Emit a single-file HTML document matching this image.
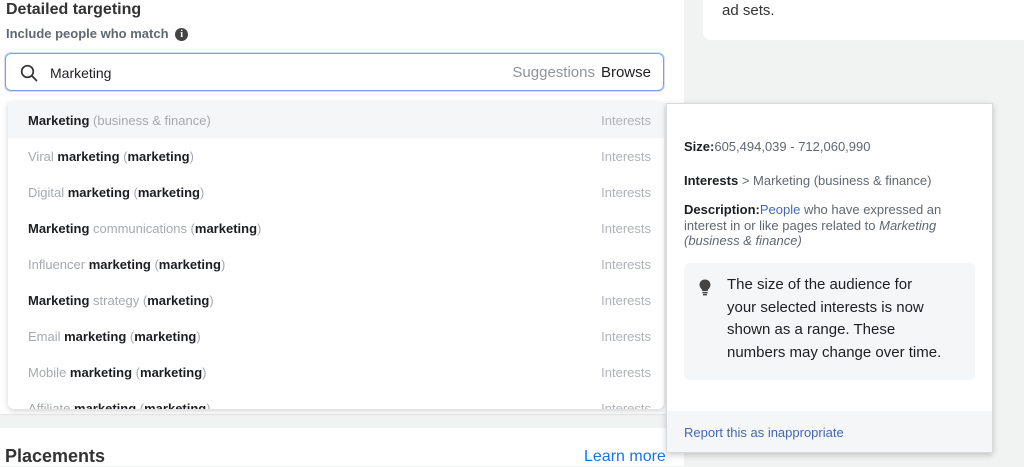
<!DOCTYPE html>
<html><head><meta charset="utf-8"><style>
*{margin:0;padding:0;box-sizing:border-box}
body{width:1024px;height:466px;overflow:hidden;background:#f1f2f2;font-family:"Liberation Sans",Arial,sans-serif;position:relative;color:#1c1e21}
.left{position:absolute;left:0;top:0;width:684px;height:466px;background:#fff}
.band{position:absolute;left:0;top:414px;width:684px;height:14px;background:#f1f2f2;border-top:1px solid #e4e6e8}
h1{position:absolute;left:6px;top:1px;font-size:16px;font-weight:bold;color:#333}
.sub{position:absolute;left:6px;top:26px;font-size:13px;color:#606770;font-weight:bold}
.info{display:inline-block;width:13px;height:13px;border-radius:50%;background:#444;color:#fff;font-size:10px;text-align:center;line-height:13px;vertical-align:1px;margin-left:3px;font-family:"Liberation Serif",serif;font-weight:bold}
.search{position:absolute;left:5px;top:53px;width:659px;height:38px;border:1px solid #7a9fe6;border-radius:6px;box-shadow:0 0 0 1px #d3defa}
.search .q{position:absolute;left:44px;top:11px;font-size:14px;color:#1c1e21}
.search .r{position:absolute;right:12px;top:10px;font-size:15px;color:#8d949e}
.search .r b{font-weight:normal;color:#1c1e21;margin-left:6px}
.dd{position:absolute;left:8px;top:102px;width:656px;height:307px;background:#fff;border-radius:0 0 6px 6px;box-shadow:0 2px 6px rgba(0,0,0,.18);overflow:hidden}
.row{height:36px;position:relative;font-size:13px;color:#a5a9ae}
.row.h{background:#f5f6f7}
.row .t{position:absolute;left:20px;top:11px}
.row .t b{color:#1c1e21}
.row .i{position:absolute;right:13px;top:11px;color:#aeb2b7}
.pl{position:absolute;left:5px;top:446px;font-size:18px;font-weight:bold;color:#333}
.lm{position:absolute;left:584px;top:448px;font-size:16px;color:#1a73e8}
.card{position:absolute;left:703px;top:-10px;width:330px;height:50px;background:#fff;border-radius:8px;font-size:15px;color:#333;padding:12px 0 0 19px}
.pop{position:absolute;left:666px;top:103px;width:327px;height:350px;background:#fff;border:1px solid #d8dadd;box-shadow:0 2px 6px rgba(0,0,0,.2);font-size:13px;color:#606770}
.pop b{color:#1c1e21}
.pop .a{position:absolute;left:17px}
.tip{position:absolute;left:17px;top:159px;width:291px;height:117px;background:#f5f6f7;border-radius:5px;font-size:15px;color:#1c1e21;line-height:22.5px;padding:11px 0 0 43px;white-space:nowrap}
.foot{position:absolute;left:0;bottom:0;width:100%;height:41px;background:#f5f6f8;color:#4267b2;padding:14px 0 0 17px;font-size:13px}
</style></head><body>
<div class="left">
<h1>Detailed targeting</h1>
<div class="sub">Include people who match <span class="info">i</span></div>
<div class="search">
<svg style="position:absolute;left:14px;top:10px" width="18" height="18" viewBox="0 0 18 18"><circle cx="7.5" cy="7.5" r="5.8" fill="none" stroke="#333" stroke-width="1.7"/><path d="M11.8 11.8L16.5 16.5" stroke="#333" stroke-width="1.8" stroke-linecap="round"/></svg>
<div class="q">Marketing</div>
<div class="r">Suggestions<b>Browse</b></div>
</div>
<div class="band"></div>
<div class="pl">Placements</div>
<div class="lm">Learn more</div>
</div>
<div class="dd">
<div class="row h"><span class="t"><b>Marketing</b> (business &amp; finance)</span><span class="i">Interests</span></div>
<div class="row"><span class="t">Viral <b>marketing</b> (<b>marketing</b>)</span><span class="i">Interests</span></div>
<div class="row"><span class="t">Digital <b>marketing</b> (<b>marketing</b>)</span><span class="i">Interests</span></div>
<div class="row"><span class="t"><b>Marketing</b> communications (<b>marketing</b>)</span><span class="i">Interests</span></div>
<div class="row"><span class="t">Influencer <b>marketing</b> (<b>marketing</b>)</span><span class="i">Interests</span></div>
<div class="row"><span class="t"><b>Marketing</b> strategy (<b>marketing</b>)</span><span class="i">Interests</span></div>
<div class="row"><span class="t">Email <b>marketing</b> (<b>marketing</b>)</span><span class="i">Interests</span></div>
<div class="row"><span class="t">Mobile <b>marketing</b> (<b>marketing</b>)</span><span class="i">Interests</span></div>
<div class="row"><span class="t">Affiliate <b>marketing</b> (<b>marketing</b>)</span><span class="i">Interests</span></div>
</div>
<div class="card">ad sets.</div>
<div class="pop">
<div class="a" style="top:35px"><b>Size:</b>605,494,039 - 712,060,990</div>
<div class="a" style="top:69px"><b>Interests</b> &gt; Marketing (business &amp; finance)</div>
<div class="a" style="top:98px;width:295px;line-height:15.5px"><b>Description:</b><span style="color:#4267b2">People</span> who have expressed an interest in or like pages related to <i>Marketing (business &amp; finance)</i></div>
<div class="tip">
<svg style="position:absolute;left:15px;top:16px" width="12" height="17" viewBox="0 0 12 17"><path d="M6 0.5C2.8 0.5 0.5 2.8 0.5 5.8c0 2 1.1 3.2 2 4.3.6.7.8 1.3.8 2h5.4c0-.7.2-1.3.8-2 .9-1.1 2-2.3 2-4.3C11.5 2.8 9.2.5 6 .5z" fill="#444"/><rect x="3.4" y="13" width="5.2" height="1.4" fill="#444"/><rect x="4" y="15" width="4" height="1.4" fill="#444"/></svg>
The size of the audience for<br>your selected interests is now<br>shown as a range. These<br>numbers may change over time.</div>
<div class="foot">Report this as inappropriate</div>
</div>
</body></html>
